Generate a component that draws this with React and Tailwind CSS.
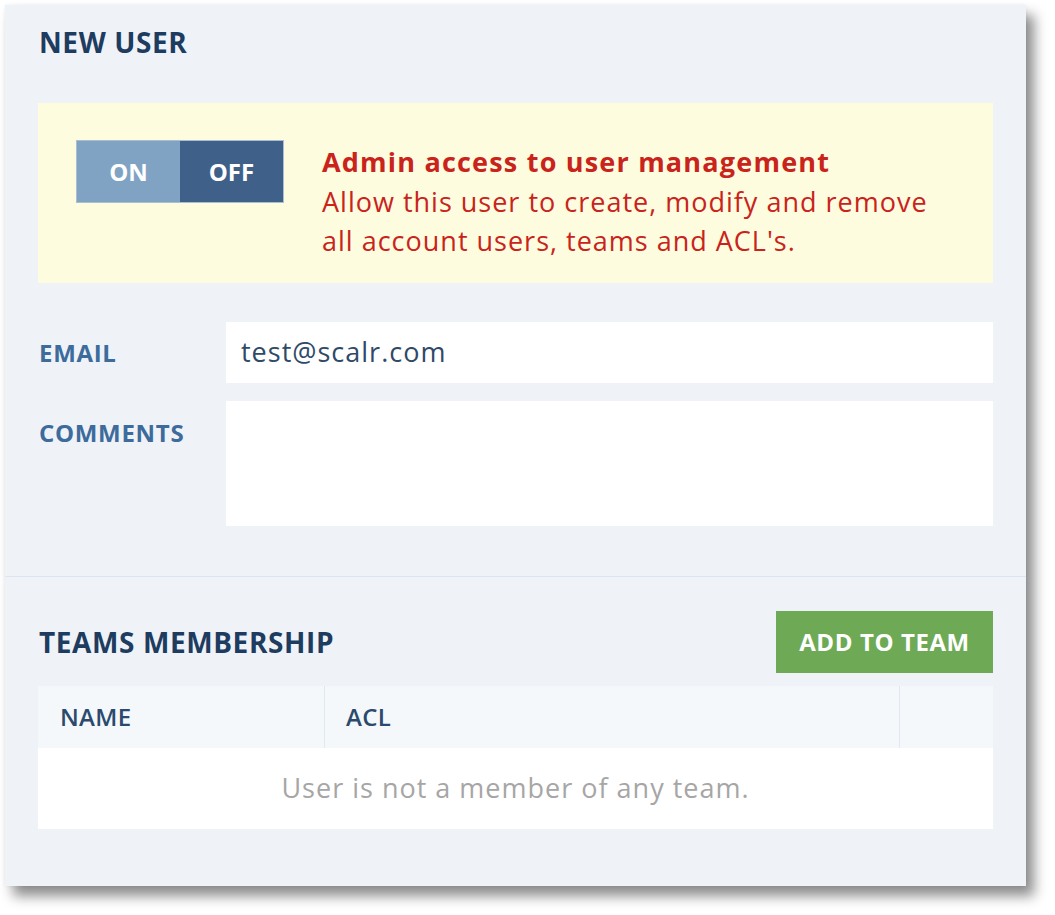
export default function App() {
  return (
    <div className="min-h-screen bg-white font-['Open_Sans',sans-serif]">
      <div className="pl-[5px] pt-[5px]">
        <div className="w-[1021px] h-[881px] bg-[#eff3f8] shadow-[8px_10px_12px_rgba(0,0,0,0.45),0_0_4px_rgba(0,0,0,0.06)]">
          {/* new user */}
          <div className="px-[33px] pt-[23px]">
            <h1 className="text-[28px] leading-[28px] font-bold tracking-[0.6px] text-[#1e3c5f] pl-[1px]">NEW USER</h1>

            <div className="mt-[47px] h-[180px] bg-[#fdfcdf] flex items-start pl-[38px] pt-[37px]">
              <div className="flex w-[208px] h-[63px] border border-[#a9bed2] shrink-0">
                <div className="w-1/2 bg-[#80a3c3] flex items-center justify-center text-white text-[24px] font-bold">ON</div>
                <div className="w-1/2 bg-[#3e6089] flex items-center justify-center text-white text-[24px] font-bold">OFF</div>
              </div>
              <div className="ml-[38px] mt-[2px] w-[630px] text-[27px] leading-[39.5px] tracking-[1px] text-[#c9231b]">
                <div className="font-bold tracking-[1.2px]">Admin access to user management</div>
                <div>Allow this user to create, modify and remove all account users, teams and ACL's.</div>
              </div>
            </div>

            <div className="mt-[39px] flex items-center">
              <div className="w-[188px] pl-[1px] text-[24px] font-bold tracking-[0.7px] text-[#3d6b9c]">EMAIL</div>
              <div className="flex-1 h-[61px] bg-white flex items-center pl-[15px] text-[27px] tracking-[1px] text-[#2f4a68]">test@scalr.com</div>
            </div>
            <div className="mt-[18px] flex items-start">
              <div className="w-[188px] pl-[1px] pt-[14px] text-[24px] font-bold tracking-[0.7px] text-[#3d6b9c]">COMMENTS</div>
              <div className="flex-1 h-[125px] bg-white" />
            </div>
          </div>

          <div className="mt-[50px] border-t border-[#dde6f0]" />

          {/* teams */}
          <div className="px-[33px] pt-[34px]">
            <div className="flex items-center justify-between">
              <h2 className="text-[28px] font-bold tracking-[0.6px] text-[#1e3c5f] pl-[1px]">TEAMS MEMBERSHIP</h2>
              <button className="w-[217px] h-[62px] bg-[#6eaa56] text-white text-[24px] font-bold tracking-[0.6px]">ADD TO TEAM</button>
            </div>
            <div className="mt-[13px]">
              <div className="flex h-[62px] bg-[#f4f8fb] text-[24px] font-semibold tracking-[0.3px] text-[#2b4a6d]">
                <div className="w-[287px] flex items-center pl-[22px] border-r border-[#e0e8f0]">NAME</div>
                <div className="w-[575px] flex items-center pl-[21px] border-r border-[#e0e8f0]">ACL</div>
                <div className="flex-1" />
              </div>
              <div className="h-[81px] bg-white flex items-center justify-center text-[27px] tracking-[1px] text-[#a6a6a6]">
                User is not a member of any team.
              </div>
            </div>
          </div>
        </div>
      </div>
    </div>
  );
}
